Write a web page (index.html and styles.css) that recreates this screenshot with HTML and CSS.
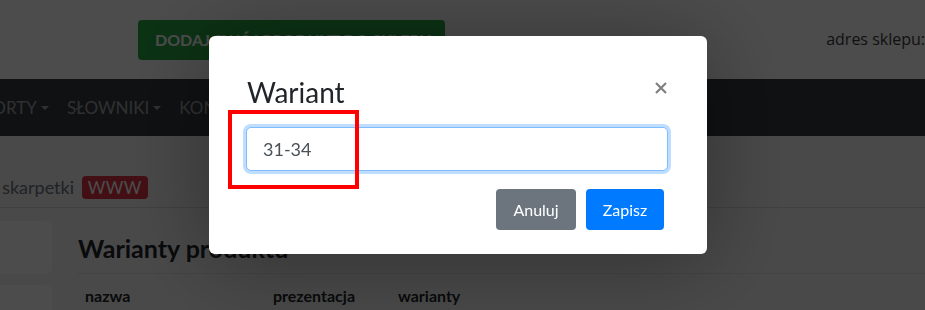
FILE: index.html
```html
<!DOCTYPE html>
<html>
<head>
    <title>Warianty produktu</title>
    <meta charset="utf-8">
    <link rel="stylesheet" href="styles.css">
</head>
<body>

    <div class="page">
        <header class="topbar">
            <a class="btn-add" href="#">DODAJ SWÓJ PRODUKT DO SKLEPU</a>
            <span class="shop-addr">adres sklepu:</span>
        </header>

        <nav class="navbar">
            <a class="nav-item dropdown" href="#">RAPORTY</a>
            <a class="nav-item dropdown" href="#">SŁOWNIKI</a>
            <a class="nav-item" href="#">KONTO</a>
        </nav>

        <div class="crumb">
            <span class="crumb-name">Produkt: Kolorowe skarpetki</span>
            <span class="badge">WWW</span>
        </div>

        <div class="content">
            <aside class="side">
                <div class="side-card"></div>
                <div class="side-card"></div>
            </aside>
            <main class="main">
                <h2>Warianty produktu</h2>
                <table class="tbl">
                    <tr>
                        <th class="c-name">nazwa</th>
                        <th class="c-pres">prezentacja</th>
                        <th>warianty</th>
                    </tr>
                </table>
            </main>
        </div>
    </div>

    <!--okno modalne-->
    <div class="backdrop">
        <div class="modal">
            <div class="modal-head">
                <h5 class="modal-title">Wariant</h5>
                <button class="close" type="button">
                    <svg width="12" height="12" viewBox="0 0 12 12"><path d="M1 1L11 11M11 1L1 11" stroke="#7f7f7f" stroke-width="2.2"/></svg>
                </button>
            </div>
            <input class="form-control" type="text" value="31-34">
            <div class="modal-foot">
                <button class="btn btn-gray" type="button">Anuluj</button>
                <button class="btn btn-blue" type="button">Zapisz</button>
            </div>
        </div>
        <div class="mark"></div>
    </div>

</body>
</html>
```

FILE: styles.css
```css
html, body {
    height: 100%;
}

body {
    margin: 0;
    background-color: #f4f4f4;
    font-family: Lato, "Noto Sans", sans-serif;
    color: #212529;
    overflow: hidden;
}

/*strona pod spodem*/
.topbar {
    height: 79px;
    display: flex;
    align-items: center;
    padding-left: 138px;
    background: #fff;
}
.btn-add {
    display: block;
    width: 308px;
    height: 40px;
    line-height: 40px;
    box-sizing: border-box;
    padding-left: 17px;
    background: #28a745;
    color: #fff;
    border-radius: 4px;
    font-weight: bold;
    font-size: 16px;
    text-decoration: none;
    white-space: nowrap;
    overflow: hidden;
}
.shop-addr {
    margin-left: 381px;
    font-family: "Open Sans", sans-serif;
    font-size: 16px;
    color: #3a3a3a;
    white-space: nowrap;
    margin-top: -2px;
}

.navbar {
    height: 57px;
    background: #343a40;
    display: flex;
    align-items: center;
    margin-left: -49px;
}
.nav-item {
    color: rgba(255,255,255,.55);
    font-size: 17px;
    text-decoration: none;
    padding: 0 9px;
}
.dropdown::after {
    content: "";
    display: inline-block;
    margin-left: 4px;
    vertical-align: 4px;
    border-top: 4px solid;
    border-left: 4px solid transparent;
    border-right: 4px solid transparent;
}

.crumb {
    height: 72px;
    box-sizing: border-box;
    padding-top: 40px;
    border-bottom: 1px solid #d8d8d8;
    margin-left: -150px;
    white-space: nowrap;
    font-size: 18px;
    color: #6c757d;
}
.badge {
    display: inline-block;
    background: #dc3545;
    color: #fff;
    border-radius: 4px;
    padding: 0 6px;
    margin-left: 3px;
    font-size: 17px;
    letter-spacing: 0.5px;
    line-height: 23px;
}

.content {
    display: flex;
    padding-top: 13px;
}
.side {
    width: 52px;
    display: flex;
    flex-direction: column;
    gap: 11px;
}
.side-card {
    height: 53px;
    background: #fff;
    border-radius: 0 6px 6px 0;
}
.main {
    margin-left: 25px;
    flex: 1;
}
.main h2 {
    margin: 12px 0 0 1px;
    font-size: 25px;
    padding-bottom: 10px;
    border-bottom: 1px solid #dee2e6;
}
.tbl {
    border-collapse: collapse;
    font-size: 16px;
}
.tbl th {
    text-align: left;
    padding: 12px 8px;
}
.c-name {
    width: 172px;
}
.c-pres {
    width: 109px;
}

/*okno modalne*/
.backdrop {
    position: fixed;
    left: 0;
    top: 0;
    right: 0;
    bottom: 0;
    background: rgba(0,0,0,.7);
}
.modal {
    position: absolute;
    left: 209px;
    top: 36px;
    width: 498px;
    box-sizing: border-box;
    padding: 36px 39px 24px 37px;
    background: #fff;
    border-radius: 6px;
    box-shadow: 0 6px 90px rgba(0,0,0,.35);
}
.modal-head {
    display: flex;
    align-items: center;
    justify-content: space-between;
    height: 40px;
    margin-bottom: 15px;
}
.modal-title {
    margin: 0 0 0 1px;
    font-size: 28px;
    font-weight: normal;
}
.close {
    border: 0;
    background: transparent;
    padding: 0;
    margin: 0 1px 8px 0;
    cursor: pointer;
    display: flex;
}
.form-control {
    display: block;
    width: 100%;
    height: 44px;
    box-sizing: border-box;
    padding: 0 16px;
    font-family: inherit;
    font-size: 18px;
    color: #495057;
    border: 1px solid #80bdff;
    border-radius: 5px;
    box-shadow: 0 0 0 3px rgba(0,123,255,.25);
    outline: 0;
}
.modal-foot {
    display: flex;
    justify-content: flex-end;
    gap: 10px;
    margin-top: 18px;
    padding-right: 4px;
}
.btn {
    height: 41px;
    border: 0;
    border-radius: 4px;
    color: #fff;
    font-family: inherit;
    font-size: 16px;
    cursor: pointer;
}
.btn-gray {
    width: 80px;
    background: #6c757d;
}
.btn-blue {
    width: 78px;
    background: #007bff;
}

/*czerwona ramka*/
.mark {
    position: absolute;
    left: 228px;
    top: 110px;
    width: 131px;
    height: 79px;
    box-sizing: border-box;
    border: 4px solid #f00;
}
```
